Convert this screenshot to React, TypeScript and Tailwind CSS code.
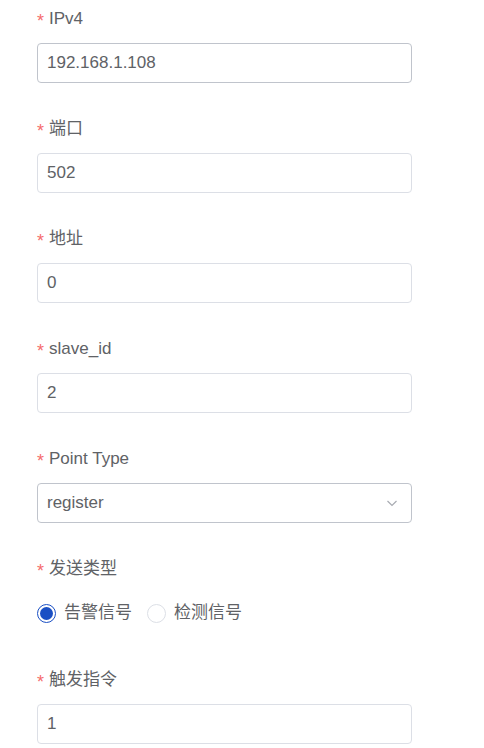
import React from 'react';

const font = { fontFamily: '"Liberation Sans", "Noto Sans CJK SC", sans-serif' };

function Label({ text }: { text: string }) {
  return (
    <div className="mb-3 flex h-6 items-center text-[17px] text-[#606266]">
      <span className="mr-[5px] mt-[3px] text-[18px] leading-none text-[#f56c6c]">*</span>
      <span>{text}</span>
    </div>
  );
}

function Field({ label, value, dark }: { label: string; value: string; dark?: boolean }) {
  return (
    <div className="mb-[34px]">
      <Label text={label} />
      <div
        className={`flex h-10 w-[375px] items-center rounded border px-[9px] text-[17px] text-[#606266] ${
          dark ? 'border-[#c0c4cc]' : 'border-[#dcdfe6]'
        }`}
      >
        {value}
      </div>
    </div>
  );
}

function Radio({ label, checked }: { label: string; checked?: boolean }) {
  return (
    <div className="mr-[15px] flex items-center">
      <span
        className={`flex h-[19px] w-[19px] items-center justify-center rounded-full border ${
          checked ? 'border-[#1a4fc4]' : 'border-[#dcdfe6]'
        }`}
      >
        {checked && <span className="h-[13px] w-[13px] rounded-full bg-[#1a4fc4]" />}
      </span>
      <span className="ml-[8px] text-[17px] text-[#606266]">{label}</span>
    </div>
  );
}

export default function App() {
  return (
    <div className="min-h-screen bg-white pl-[37px] pt-[7px]" style={font}>
      <Field label="IPv4" value="192.168.1.108" dark />
      <Field label="端口" value="502" />
      <Field label="地址" value="0" />
      <Field label="slave_id" value="2" />
      <div className="mb-[34px]">
        <Label text="Point Type" />
        <div className="flex h-10 w-[375px] items-center justify-between rounded border border-[#c0c4cc] pl-[9px] pr-[13px] text-[17px] text-[#606266]">
          <span>register</span>
          <svg width="12" height="12" viewBox="0 0 12 12" fill="none">
            <path d="M1.5 4l4.5 4.5L10.5 4" stroke="#a8abb2" strokeWidth="1.2" />
          </svg>
        </div>
      </div>
      <div className="mb-[35px]">
        <Label text="发送类型" />
        <div className="flex h-10 items-center">
          <Radio label="告警信号" checked />
          <Radio label="检测信号" />
        </div>
      </div>
      <Field label="触发指令" value="1" />
    </div>
  );
}
